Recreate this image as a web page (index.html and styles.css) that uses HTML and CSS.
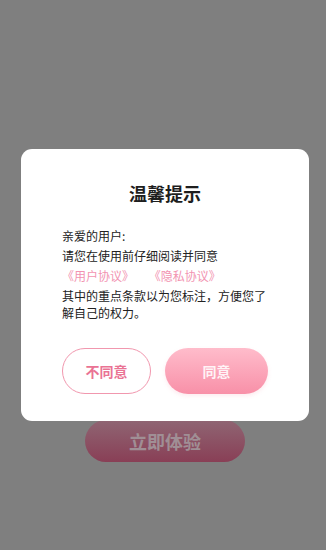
FILE: index.html
```html
<!DOCTYPE html>
<html lang="zh-CN">
<head>
    <meta charset="UTF-8">
    <meta name="viewport" content="width=device-width, initial-scale=1.0">
    <title>温馨提示</title>
    <link rel="stylesheet" href="styles.css">
</head>
<body>
    <div class="page">
        <button class="start-btn">立即体验</button>
    </div>

    <div class="mask">
        <div class="dialog">
            <div class="dialog-title">温馨提示</div>
            <div class="dialog-body">
                <p>亲爱的用户:</p>
                <p>请您在使用前仔细阅读并同意</p>
                <p class="links">
                    <a href="#">《用户协议》</a>
                    <a href="#">《隐私协议》</a>
                </p>
                <p>其中的重点条款以为您标注，方便您了解自己的权力。</p>
            </div>
            <div class="dialog-actions">
                <button class="btn btn-cancel">不同意</button>
                <button class="btn btn-ok">同意</button>
            </div>
        </div>
    </div>
</body>
</html>
```

FILE: styles.css
```css
* {
    box-sizing: border-box;
}

body {
    margin: 0;
    height: 100vh;
    font-family: "Noto Sans CJK SC", "Noto Sans", sans-serif;
    background-color: #7f7f7f;
    overflow: hidden;
}

.page {
    height: 100%;
    display: flex;
    flex-direction: column;
    align-items: center;
    padding-top: 421px;
    padding-left: 4px;
}

.start-btn {
    width: 160px;
    height: 42px;
    border: none;
    border-radius: 21px;
    background: linear-gradient(to bottom, #8f6573, #893f56);
    color: #a08f95;
    font-family: inherit;
    font-size: 18px;
    font-weight: bold;
    margin-top: -1px;
}

.mask {
    position: fixed;
    top: 0;
    left: 0;
    right: 0;
    bottom: 0;
    padding: 149px 0 0 21px;
}

.dialog {
    width: 288px;
    height: 272px;
    background-color: #fff;
    border-radius: 11px;
    padding: 32px 41px 0;
}

.dialog-title {
    text-align: center;
    font-size: 18px;
    line-height: 24px;
    font-weight: bold;
    color: #1e1e1e;
}

.dialog-body {
    margin-top: 22px;
    font-size: 12px;
    line-height: 17px;
    color: #222;
}

.dialog-body p {
    margin: 0 0 3px;
}

.dialog-body p:last-child {
    margin-bottom: 0;
}

.links a {
    color: #f293b1;
    text-decoration: none;
    margin-right: 12px;
}

.dialog-actions {
    display: flex;
    gap: 14px;
    margin-top: 27px;
}

.btn {
    height: 46px;
    border-radius: 23px;
    font-family: inherit;
    font-size: 14px;
    font-weight: bold;
    cursor: pointer;
}

.btn-cancel {
    width: 89px;
    background-color: #fff;
    border: 1px solid #f197ae;
    color: #ea7394;
}

.btn-ok {
    flex: 1;
    border: none;
    background: linear-gradient(to bottom, #ffbccb, #f890a8);
    color: #fff3f6;
    box-shadow: 0 2px 4px rgba(240, 120, 150, 0.15);
}
```
